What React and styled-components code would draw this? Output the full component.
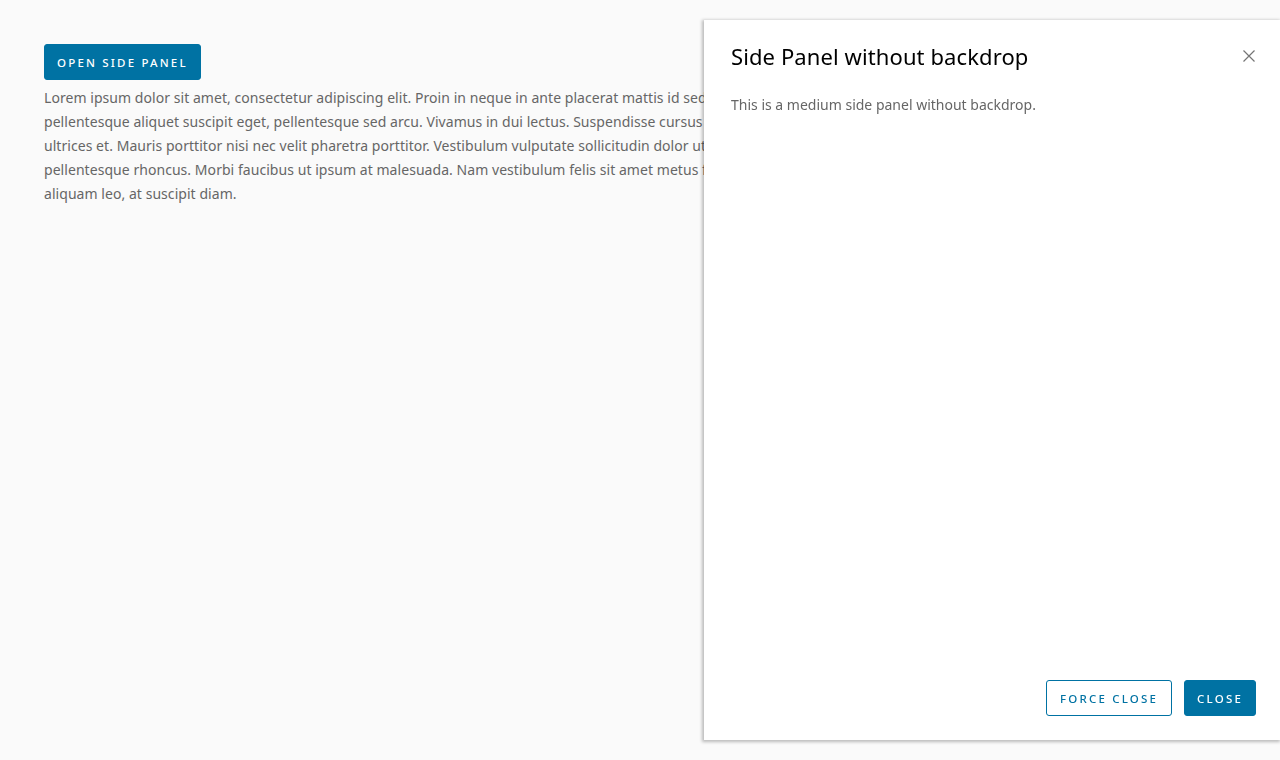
import React from "react";
import styled, { createGlobalStyle } from "styled-components";

const Global = createGlobalStyle`
  html, body { margin: 0; padding: 0; }
  body {
    background: #fafafa;
    font-family: "Noto Sans", "Open Sans", sans-serif;
    color: #666;
    width: 1280px;
    height: 760px;
    overflow: hidden;
  }
  * { box-sizing: border-box; }
`;

const Page = styled.main`
  padding: 44px 44px 0 44px;
  display: flex;
  flex-direction: column;
  align-items: flex-start;
  gap: 6px;
`;

const Button = styled.button`
  height: 36px;
  padding: 0 ${(p) => (p.$outline ? 13 : 12)}px;
  border-radius: 3px;
  border: 1px solid #0072a3;
  background: ${(p) => (p.$outline ? "#fff" : "#0072a3")};
  color: ${(p) => (p.$outline ? "#0072a3" : "#fff")};
  font-family: "Noto Sans", sans-serif;
  font-size: 11.5px;
  font-weight: 500;
  letter-spacing: 0.19em;
  text-transform: uppercase;
  cursor: pointer;
  white-space: nowrap;
`;

const Lorem = styled.p`
  margin: 0;
  font-size: 14px;
  line-height: 24px;
  color: #666;
  white-space: nowrap;
  letter-spacing: 0.05px;
`;

const Panel = styled.aside`
  position: fixed;
  top: 20px;
  right: 0;
  width: 576px;
  height: 720px;
  background: #fff;
  box-shadow: -1px 1px 3px 1px rgba(0, 0, 0, 0.25);
  display: flex;
  flex-direction: column;
  padding: 20px 24px 24px 27px;
`;

const Header = styled.header`
  display: flex;
  align-items: center;
  justify-content: space-between;
`;

const Title = styled.h3`
  margin: 0;
  font-size: 22px;
  font-weight: 400;
  color: #000;
  line-height: 32px;
  letter-spacing: 0.1px;
`;

const CloseX = styled.button`
  border: 0;
  background: none;
  padding: 0;
  width: 16px;
  height: 16px;
  display: flex;
  align-items: center;
  justify-content: center;
  cursor: pointer;
  margin-right: -1px;
`;

const Body = styled.div`
  flex: 1;
  padding-top: 21px;
  font-size: 14px;
  line-height: 24px;
  color: #666;
`;

const Footer = styled.footer`
  display: flex;
  justify-content: flex-end;
  gap: 12px;
`;

export default function App() {
  return (
    <>
      <Global />
      <Page>
        <Button>Open side panel</Button>
        <Lorem>
          Lorem ipsum dolor sit amet, consectetur adipiscing elit. Proin in neque in ante placerat mattis id sed quam. Proin rhoncus lacus et tempor dignissim. Vivamus sem quam,
          <br />
          pellentesque aliquet suscipit eget, pellentesque sed arcu. Vivamus in dui lectus. Suspendisse cursus est ac nisl imperdiet viverra. Aenean sagittis nibh lacus, in eleifend urna
          <br />
          ultrices et. Mauris porttitor nisi nec velit pharetra porttitor. Vestibulum vulputate sollicitudin dolor ut tincidunt. Phasellus vitae blandit felis. Nullam posuere ipsum tincidunt velit
          <br />
          pellentesque rhoncus. Morbi faucibus ut ipsum at malesuada. Nam vestibulum felis sit amet metus finibus hendrerit. Fusce faucibus odio eget ex vulputate rhoncus. Fusce nec
          <br />
          aliquam leo, at suscipit diam.
        </Lorem>
      </Page>
      <Panel role="dialog" aria-label="Side Panel without backdrop">
        <Header>
          <Title>Side Panel without backdrop</Title>
          <CloseX aria-label="Close">
            <svg width="14" height="14" viewBox="0 0 14 14">
              <path d="M1.5 1.5 L12.5 12.5 M12.5 1.5 L1.5 12.5" stroke="#757575" strokeWidth="1.2" fill="none" />
            </svg>
          </CloseX>
        </Header>
        <Body>This is a medium side panel without backdrop.</Body>
        <Footer>
          <Button $outline>Force close</Button>
          <Button>Close</Button>
        </Footer>
      </Panel>
    </>
  );
}
